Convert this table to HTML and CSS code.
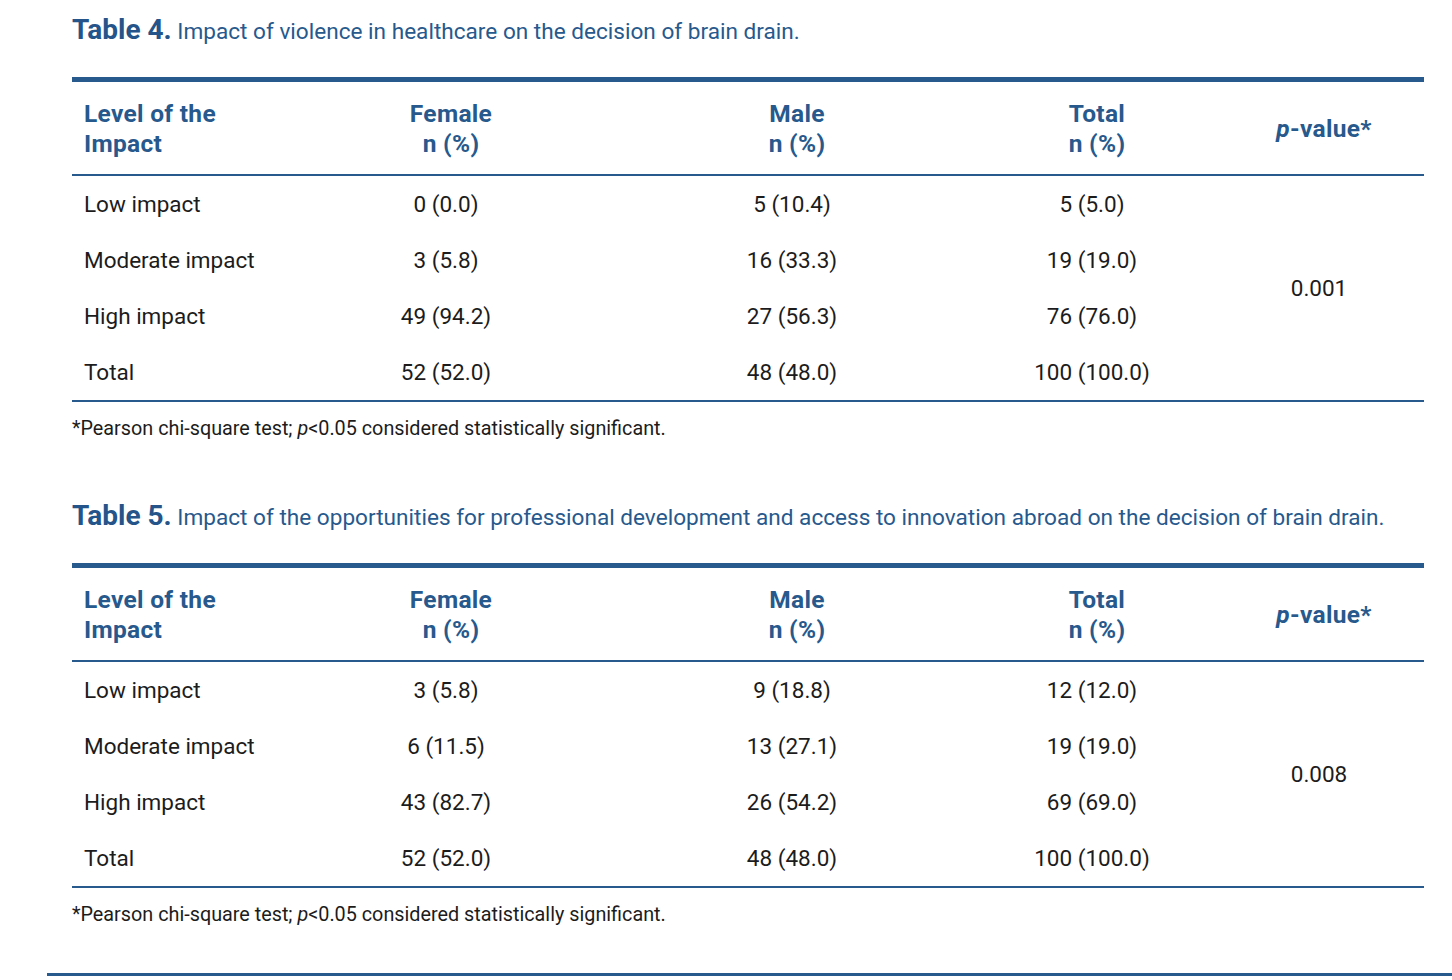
FILE: index.html
```html
<!DOCTYPE html>
<html lang="en">
<head>
<meta charset="utf-8">
<title>Tables 4 and 5</title>
<link rel="stylesheet" href="styles.css">
</head>
<body>
<main class="page">
  <section class="block">
    <p class="caption"><span class="label">Table 4.</span> Impact of violence in healthcare on the decision of brain drain.</p>
    <table class="data">
      <colgroup>
        <col class="c-level"><col class="c-female"><col class="c-male"><col class="c-total"><col class="c-p">
      </colgroup>
      <thead>
        <tr>
          <th class="first">Level of the<br>Impact</th>
          <th>Female<br>n (%)</th>
          <th>Male<br>n (%)</th>
          <th>Total<br>n (%)</th>
          <th><i>p</i>-value*</th>
        </tr>
      </thead>
      <tbody>
        <tr><td class="first">Low impact</td><td>0 (0.0)</td><td>5 (10.4)</td><td>5 (5.0)</td><td class="pval" rowspan="4">0.001</td></tr>
        <tr><td class="first">Moderate impact</td><td>3 (5.8)</td><td>16 (33.3)</td><td>19 (19.0)</td></tr>
        <tr><td class="first">High impact</td><td>49 (94.2)</td><td>27 (56.3)</td><td>76 (76.0)</td></tr>
        <tr class="last"><td class="first">Total</td><td>52 (52.0)</td><td>48 (48.0)</td><td>100 (100.0)</td></tr>
      </tbody>
    </table>
    <p class="note">*Pearson chi-square test; <i>p</i>&lt;0.05 considered statistically significant.</p>
  </section>

  <section class="block">
    <p class="caption"><span class="label">Table 5.</span> Impact of the opportunities for professional development and access to innovation abroad on the decision of brain drain.</p>
    <table class="data">
      <colgroup>
        <col class="c-level"><col class="c-female"><col class="c-male"><col class="c-total"><col class="c-p">
      </colgroup>
      <thead>
        <tr>
          <th class="first">Level of the<br>Impact</th>
          <th>Female<br>n (%)</th>
          <th>Male<br>n (%)</th>
          <th>Total<br>n (%)</th>
          <th><i>p</i>-value*</th>
        </tr>
      </thead>
      <tbody>
        <tr><td class="first">Low impact</td><td>3 (5.8)</td><td>9 (18.8)</td><td>12 (12.0)</td><td class="pval" rowspan="4">0.008</td></tr>
        <tr><td class="first">Moderate impact</td><td>6 (11.5)</td><td>13 (27.1)</td><td>19 (19.0)</td></tr>
        <tr><td class="first">High impact</td><td>43 (82.7)</td><td>26 (54.2)</td><td>69 (69.0)</td></tr>
        <tr class="last"><td class="first">Total</td><td>52 (52.0)</td><td>48 (48.0)</td><td>100 (100.0)</td></tr>
      </tbody>
    </table>
    <p class="note">*Pearson chi-square test; <i>p</i>&lt;0.05 considered statistically significant.</p>
  </section>
</main>
<div class="page-rule"></div>
</body>
</html>
```

FILE: styles.css
```css
html, body {
  margin: 0;
  padding: 0;
  background: #ffffff;
}

body {
  font-family: Roboto, "Liberation Sans", Arial, sans-serif;
  color: #1c1c1c;
  overflow: hidden;
}

.page {
  padding: 13px 0 0 72px;
  width: 1352px;
}

.block + .block {
  margin-top: 58px;
}

.caption {
  margin: 0 0 28px 0;
  font-size: 22.6px;
  line-height: 34px;
  color: #27598d;
  white-space: nowrap;
}

.caption .label {
  font-size: 28px;
  font-weight: 700;
  color: #245489;
}

.data {
  width: 1352px;
  table-layout: fixed;
  border-collapse: separate;
  border-spacing: 0;
  font-size: 22.5px;
}

.c-level { width: 206px; }
.c-female { width: 346px; }
.c-male { width: 346px; }
.c-total { width: 254px; }
.c-p { width: 200px; }

.data th {
  border-top: 5px solid #285a8e;
  border-bottom: 2px solid #285a8e;
  padding: 17px 12px 15px 12px;
  line-height: 30px;
  font-size: 24.5px;
  letter-spacing: 0.3px;
  font-weight: 700;
  color: #27598d;
  text-align: center;
  vertical-align: middle;
}

.data th.first {
  text-align: left;
}

.data td {
  height: 56px;
  padding: 0 22px 0 12px;
  line-height: 30px;
  text-align: center;
  vertical-align: middle;
  box-sizing: border-box;
}

.data td.first {
  text-align: left;
  padding: 0 12px;
}

.data tr.last td,
.data td.pval {
  border-bottom: 2px solid #285a8e;
}

.data tr.last td {
  height: 58px;
}

.note {
  margin: 15px 0 0 0;
  font-size: 19.8px;
  line-height: 24px;
  color: #1c1c1c;
}

.page-rule {
  margin: 46px 0 0 47px;
  height: 3px;
  background: #285a8e;
}
```
